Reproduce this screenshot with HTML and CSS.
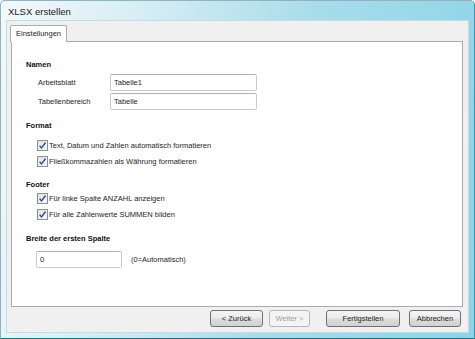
FILE: index.html
```html
<!DOCTYPE html>
<html lang="de">
<head>
    <meta charset="UTF-8">
    <meta name="viewport" content="width=device-width, initial-scale=1.0">
    <title>XLSX erstellen</title>
    <link rel="stylesheet" href="styles.css">
</head>
<body>
    <div class="window">
        <div class="titlebar">XLSX erstellen</div>
        <div class="client">
            <div class="tabs">
                <div class="tab">Einstellungen</div>
            </div>
            <div class="panel">
                <h3 class="group-title names-title">Namen</h3>
                <div class="field-row">
                    <label class="field-label">Arbeitsblatt</label>
                    <input class="text-input wide" type="text" value="Tabelle1">
                </div>
                <div class="field-row last">
                    <label class="field-label">Tabellenbereich</label>
                    <input class="text-input wide" type="text" value="Tabelle">
                </div>

                <h3 class="group-title">Format</h3>
                <div class="check-row">
                    <span class="checkbox"><svg width="9" height="9" viewBox="0 0 9 9"><path d="M1.6 4.8 L3.5 6.9 L7.5 1.5" fill="none" stroke="#2a4a8c" stroke-width="1.3"/></svg></span>
                    <span>Text, Datum und Zahlen automatisch formatieren</span>
                </div>
                <div class="check-row">
                    <span class="checkbox"><svg width="9" height="9" viewBox="0 0 9 9"><path d="M1.6 4.8 L3.5 6.9 L7.5 1.5" fill="none" stroke="#2a4a8c" stroke-width="1.3"/></svg></span>
                    <span>Fließkommazahlen als Währung formatieren</span>
                </div>

                <h3 class="group-title footer-title">Footer</h3>
                <div class="check-row">
                    <span class="checkbox"><svg width="9" height="9" viewBox="0 0 9 9"><path d="M1.6 4.8 L3.5 6.9 L7.5 1.5" fill="none" stroke="#2a4a8c" stroke-width="1.3"/></svg></span>
                    <span>Für linke Spalte ANZAHL anzeigen</span>
                </div>
                <div class="check-row">
                    <span class="checkbox"><svg width="9" height="9" viewBox="0 0 9 9"><path d="M1.6 4.8 L3.5 6.9 L7.5 1.5" fill="none" stroke="#2a4a8c" stroke-width="1.3"/></svg></span>
                    <span>Für alle Zahlenwerte SUMMEN bilden</span>
                </div>

                <h3 class="group-title width-title">Breite der ersten Spalte</h3>
                <div class="width-row">
                    <input class="text-input narrow" type="text" value="0">
                    <span class="hint">(0=Automatisch)</span>
                </div>
            </div>
            <div class="buttons">
                <button class="btn back">&lt; Zurück</button>
                <button class="btn disabled" disabled>Weiter &gt;</button>
                <button class="btn finish">Fertigstellen</button>
                <button class="btn cancel">Abbrechen</button>
            </div>
        </div>
    </div>
</body>
</html>
```

FILE: styles.css
```css
body {
    margin: 0;
    padding: 0;
    font-family: 'Liberation Sans', Arial, sans-serif;
    font-size: 7.5px;
    color: #1e1e1e;
    background-color: #ffffff;
}
.window {
    width: 475px;
    height: 339px;
    box-sizing: border-box;
    display: flex;
    flex-direction: column;
    border: 1px solid #8fb4c0;
    border-bottom-color: #1f6f80;
    border-right-color: #3a98ac;
    border-radius: 5px 5px 0 0;
    background: linear-gradient(100deg, #f4f8fa 0%, #d8eef5 25%, #a8dcea 60%, #8ad4e8 100%);
}
.titlebar {
    height: 19px;
    line-height: 22px;
    padding-left: 7px;
    font-size: 9.5px;
    color: #1a1a1a;
}
.client {
    flex: 1;
    margin: 0 5px 5px 5px;
    padding: 4px 4px 0 4px;
    background-color: #f0f0f0;
    border: 1px solid #c4dce4;
    display: flex;
    flex-direction: column;
}
.tabs {
    display: flex;
    height: 17px;
    position: relative;
    z-index: 1;
}
.tab {
    height: 17px;
    box-sizing: border-box;
    padding: 0 5px;
    line-height: 16px;
    background-color: #ffffff;
    border: 1px solid #a8adb2;
    border-bottom: none;
    border-radius: 2px 2px 0 0;
    margin-left: -1px;
}
.panel {
    height: 266px;
    box-sizing: border-box;
    margin-top: -1px;
    margin-right: 1px;
    padding: 18px 0 0 14px;
    background-color: #ffffff;
    border: 1px solid #a8adb2;
}
.group-title {
    margin: 0 0 9px 0;
    font-size: 7.5px;
    font-weight: bold;
    color: #111111;
    line-height: 10px;
}
.names-title {
    margin-bottom: 4px;
}
.footer-title {
    margin-bottom: 3px;
}
.width-title {
    margin-bottom: 7px;
}
.field-row {
    display: flex;
    align-items: center;
    margin: 0 0 2px 12px;
    height: 17px;
}
.field-row.last {
    margin-bottom: 11px;
}
.field-label {
    width: 72px;
}
.text-input {
    height: 17px;
    box-sizing: border-box;
    border: 1px solid #c6cbd1;
    border-top-color: #aab0b8;
    border-radius: 2px;
    padding: 0 3px;
    font-family: inherit;
    font-size: 7.5px;
    color: #1e1e1e;
    background-color: #ffffff;
    outline: none;
}
.wide {
    width: 147px;
}
.narrow {
    width: 86px;
}
.check-row {
    display: flex;
    align-items: center;
    gap: 1px;
    margin: 0 0 5px 11px;
    height: 11px;
}
.check-row + .group-title {
    margin-top: 13px;
}
.check-row + .width-title {
    margin-top: 14px;
}
.checkbox {
    width: 11px;
    height: 11px;
    box-sizing: border-box;
    border: 1px solid #8e8f8f;
    background: linear-gradient(135deg, #dfe2e6, #f8f8f8);
    display: flex;
    align-items: center;
    justify-content: center;
}
.width-row {
    display: flex;
    align-items: center;
    margin-left: 10px;
    gap: 9px;
}
.buttons {
    display: flex;
    justify-content: flex-end;
    padding: 3px 3px 0 0;
}
.btn {
    height: 17px;
    box-sizing: border-box;
    padding: 0;
    font-family: inherit;
    font-size: 7.5px;
    color: #1e1e1e;
    border: 1px solid #707070;
    border-radius: 3px;
    background: linear-gradient(#f4f4f4 0%, #ebebeb 48%, #dcdcdc 52%, #d2d2d2 100%);
    margin-left: 6px;
}
.back {
    width: 53px;
}
.disabled {
    width: 41px;
    color: #a0a0a0;
    border-color: #b4b8bc;
    background: #f4f4f4;
}
.finish {
    width: 74px;
    margin-left: 16px;
}
.cancel {
    width: 52px;
    margin-left: 9px;
}
```
